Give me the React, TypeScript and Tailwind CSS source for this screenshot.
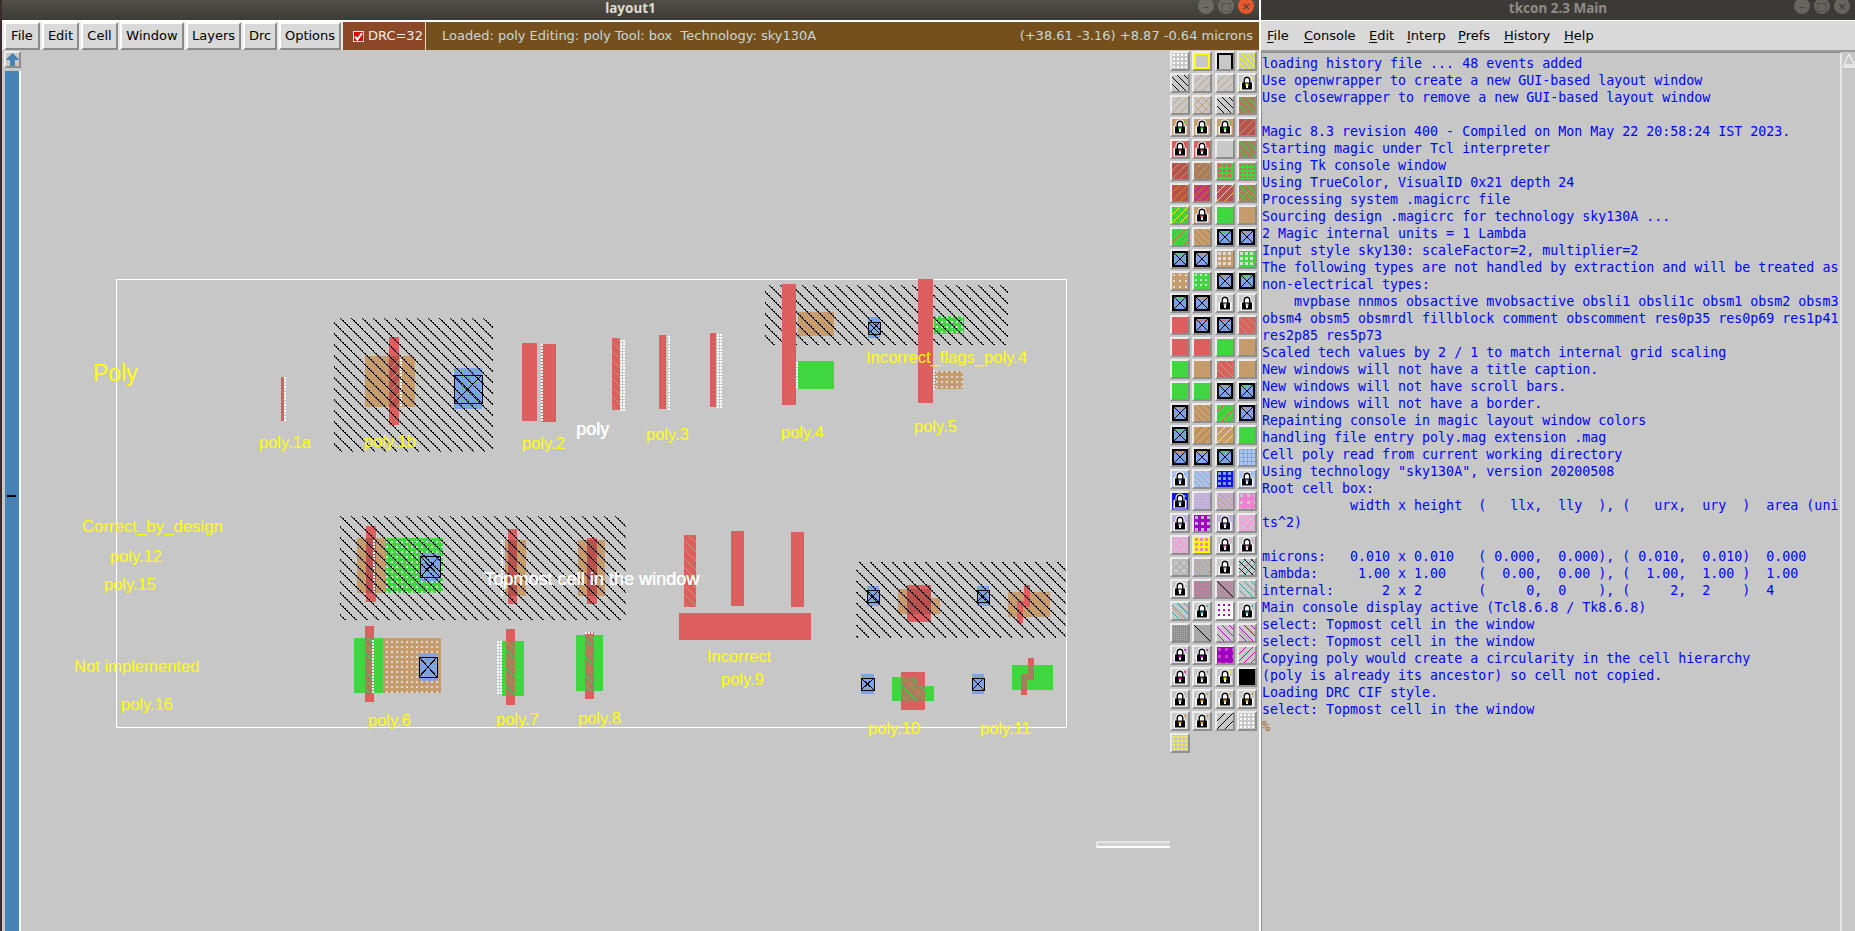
const RED = "#dc5e5e";
const TAN = "#c69c6d";
const GREEN = "#3fd63f";
const BROWN = "#a67e5c";
const DARKRED = "#b8524f";
const BLUE = "#7ca3ea";

const MENU = [
  { name: "File", w: "w-[36px]" },
  { name: "Edit", w: "w-[37px]" },
  { name: "Cell", w: "w-[37px]" },
  { name: "Window", w: "w-[64px]" },
  { name: "Layers", w: "w-[55px]" },
  { name: "Drc", w: "w-[34px]" },
  { name: "Options", w: "w-[62px]" },
];
const TKMENU = [
  { name: "File", w: "w-[37px]" },
  { name: "Console", w: "w-[65px]" },
  { name: "Edit", w: "w-[38px]" },
  { name: "Interp", w: "w-[51px]" },
  { name: "Prefs", w: "w-[46px]" },
  { name: "History", w: "w-[60px]" },
  { name: "Help", w: "w-[40px]" },
];

const LOG = [
  "loading history file ... 48 events added",
  "Use openwrapper to create a new GUI-based layout window",
  "Use closewrapper to remove a new GUI-based layout window",
  " ",
  "Magic 8.3 revision 400 - Compiled on Mon May 22 20:58:24 IST 2023.",
  "Starting magic under Tcl interpreter",
  "Using Tk console window",
  "Using TrueColor, VisualID 0x21 depth 24",
  "Processing system .magicrc file",
  "Sourcing design .magicrc for technology sky130A ...",
  "2 Magic internal units = 1 Lambda",
  "Input style sky130: scaleFactor=2, multiplier=2",
  "The following types are not handled by extraction and will be treated as",
  "non-electrical types:",
  "    mvpbase nnmos obsactive mvobsactive obsli1 obsli1c obsm1 obsm2 obsm3",
  "obsm4 obsm5 obsmrdl fillblock comment obscomment res0p35 res0p69 res1p41",
  "res2p85 res5p73",
  "Scaled tech values by 2 / 1 to match internal grid scaling",
  "New windows will not have a title caption.",
  "New windows will not have scroll bars.",
  "New windows will not have a border.",
  "Repainting console in magic layout window colors",
  "handling file entry poly.mag extension .mag",
  "Cell poly read from current working directory",
  'Using technology "sky130A", version 20200508',
  "Root cell box:",
  "           width x height  (   llx,  lly  ), (   urx,  ury  )  area (uni",
  "ts^2)",
  " ",
  "microns:   0.010 x 0.010   ( 0.000,  0.000), ( 0.010,  0.010)  0.000",
  "lambda:     1.00 x 1.00    (  0.00,  0.00 ), (  1.00,  1.00 )  1.00",
  "internal:      2 x 2       (     0,  0    ), (     2,  2    )  4",
  "Main console display active (Tcl8.6.8 / Tk8.6.8)",
  "select: Topmost cell in the window",
  "select: Topmost cell in the window",
  "Copying poly would create a circularity in the cell hierarchy",
  "(poly is already its ancestor) so cell not copied.",
  "Loading DRC CIF style.",
  "select: Topmost cell in the window",
];

// label: text, left x, baseline y, font size
const LABELS: [string, number, number, number, string?][] = [
  ["Poly", 93, 382, 23],
  ["poly.1a", 259, 448, 16.5],
  ["poly.1b", 364, 447, 16.5],
  ["poly.2", 522, 449, 16.5],
  ["poly", 576, 435, 18, "#ffffff"],
  ["poly.3", 646, 440, 16.5],
  ["poly.4", 781, 438, 16.5],
  ["poly.5", 914, 432, 16.5],
  ["Incorrect_flags_poly.4", 866, 364, 16.6],
  ["Correct_by_design", 82, 533, 16.8],
  ["poly.12", 110, 562, 16.5],
  ["poly.15", 104, 590, 16.5],
  ["Not implemented", 74, 673, 16.6],
  ["poly.16", 121, 710, 16.5],
  ["poly.6", 368, 726, 16.5],
  ["poly.7", 496, 725, 16.5],
  ["poly.8", 578, 724, 16.5],
  ["Topmost cell in the window", 484, 585, 18.1, "#ffffff"],
  ["Incorrect", 707, 662, 16.5],
  ["poly.9", 721, 685, 16.5],
  ["poly.10", 868, 734, 16.5],
  ["poly.11", 980, 734, 16.5],
];

type Line = [string, "/" | "\\", number?];
type TileSpec = {
  b?: string;
  l?: Line[];
  d?: [string, number, number];
  x?: string;
  k?: string;
  o?: string;
  r?: string;
};

const GRAY = "#c8c8c8";
const lock = (k: string, b = GRAY): TileSpec => ({ b, k });
const con = (x: string): TileSpec => ({ b: BLUE, x });
const hatch = (b: string, c: string, dir: "/" | "\\" = "/", n = 8): TileSpec => ({ b, l: [[c, dir, n]] });
const dots = (b: string, c: string, s = 2, n = 4): TileSpec => ({ b, d: [c, s, n] });
const solid = (b: string): TileSpec => ({ b });
const ring = (r: string, b = GRAY): TileSpec => ({ b, r });

const TILES: TileSpec[] = [
  dots(GRAY, "#ffffff"), { b: GRAY, o: "#ffff00" }, { b: GRAY, o: "#000000" }, hatch(GRAY, "#ffff00", "\\", 6),
  hatch(GRAY, "#000000", "\\", 7), hatch(GRAY, TAN), hatch(GRAY, TAN), lock("#ffff00"),
  hatch(GRAY, TAN), { b: GRAY, l: [[TAN, "/", 8], [TAN, "\\", 8]] }, hatch(GRAY, "#000000", "\\", 7), hatch(BROWN, GREEN, "\\"),
  lock(GREEN, TAN), lock(GREEN, TAN), lock(GREEN, TAN), hatch(DARKRED, TAN),
  lock(DARKRED, RED), lock(DARKRED, RED), solid(GRAY), { b: BROWN, l: [[GREEN, "\\", 8], [RED, "/", 8]] },
  hatch(DARKRED, TAN), hatch(BROWN, TAN), dots(GREEN, RED, 3, 5), dots(GREEN, RED, 2, 4),
  hatch(DARKRED, "#e08a1e"), hatch(DARKRED, "#d000a0"), hatch(DARKRED, "#ffff00"), { b: BROWN, l: [[GREEN, "\\", 8], ["#e08a1e", "/", 8]] },
  { b: GREEN, l: [["#ffff00", "/", 8], [RED, "\\", 8]] }, lock(RED, TAN), solid(GREEN), solid(TAN),
  hatch(GREEN, RED, "/", 7), hatch(TAN, BROWN, "\\", 7), con(GREEN), con(TAN),
  con(GREEN), con(TAN), dots(TAN, "#dcdcdc", 3, 5), dots(GREEN, "#dcdcdc", 3, 5),
  dots(TAN, "#dcdcdc", 2, 6), dots(GREEN, "#dcdcdc", 2, 5), con(TAN), con(GREEN),
  con(GREEN), con(TAN), lock("#cccccc"), lock("#cccccc"),
  solid(RED), con(RED), con(RED), hatch(RED, TAN, "\\"),
  solid(RED), solid(RED), solid(GREEN), solid(TAN),
  solid(GREEN), solid(TAN), hatch(RED, TAN, "\\"), solid(TAN),
  solid(GREEN), solid(GREEN), con(TAN), con(GREEN),
  con(TAN), hatch(TAN, BROWN, "\\", 7), hatch(GREEN, RED, "/", 7), con(TAN),
  con(GREEN), hatch(TAN, "#a87a18"), hatch(TAN, "#ffff00"), solid(GREEN),
  con("#e08a1e"), con("#e8c020"), con(GREEN), dots(BLUE, "#b0c8f0", 3, 4),
  lock(BLUE, "#a9c2f0"), hatch("#a9c2f0", TAN, "\\", 6), dots("#1010f0", BLUE, 3, 5), lock(BLUE, "#a9c2f0"),
  lock(BLUE, "#1010f0"), dots("#c0b0d8", "#d4c8e4", 1, 3), hatch("#c0b0d8", TAN, "\\", 6), dots("#f080d0", "#c8c8c8", 3, 7),
  lock("#c0a8e0", "#c0b0d8"), dots("#a000c0", "#c0b0d8", 3, 6), lock("#c0a8e0", "#c0b0d8"), ring("#f4a0dc"),
  ring("#f4a0dc"), dots("#ffff00", "#f080d0", 3, 5), lock("#f080d0"), lock("#f080d0"),
  ring("#b4b4b4"), hatch("#b4b4b4", TAN, "\\", 6), lock("#c0c0c0"), { b: GRAY, l: [["#28a8a8", "/", 7], ["#000000", "\\", 7]] },
  lock("#ffffff"), dots("#c080a0", "#909090", 2, 4), hatch("#b090a0", "#000000", "\\", 16), hatch(GRAY, "#28a8a8", "\\", 7),
  { b: GRAY, l: [["#28a8a8", "\\", 7], [TAN, "\\", 11]] }, lock("#28a8a8"), dots("#ffffff", "#b000c0", 2, 5), lock("#28a8a8"),
  dots("#a0a0a0", "#787878", 1, 2), hatch("#a8a8a8", "#000000", "\\", 16), hatch(GRAY, "#b000c0", "\\", 7), { b: GRAY, l: [["#b000c0", "\\", 7], [TAN, "\\", 11]] },
  lock("#b000c0"), lock("#b000c0"), dots("#a000c0", "#d040d0", 3, 7), hatch(GRAY, "#d000a0", "/", 7),
  lock("#d000a0"), lock("#888888"), lock("#ffff00"), solid("#000000"),
  lock("#b0b0b0"), lock("#c89018"), lock("#c89018"), lock("#c89018"),
  lock("#c89018"), lock("#c89018"), hatch(GRAY, "#000000", "/", 8), dots(GRAY, "#ffffff", 2, 4),
  dots(GRAY, "#ffff00", 2, 4),
];

function Tile({ t }: { t: TileSpec }) {
  const parts: React.ReactNode[] = [];
  (t.l || []).forEach(([c, dir, n = 8], a) => {
    for (let i = -16; i < 32; i += n) {
      const d = dir === "/" ? `M${i} 16L${i + 16} 0` : `M${i} 0L${i + 16} 16`;
      parts.push(<path key={`l${a}${i}`} d={d} stroke={c} strokeWidth="1" fill="none" />);
    }
  });
  if (t.d) {
    const [c, s, n] = t.d;
    for (let y = 1; y < 16; y += n) {
      for (let x = 1; x < 16; x += n) {
        parts.push(<rect key={`d${x}-${y}`} x={x} y={y} width={s} height={s} fill={c} />);
      }
    }
  }
  return (
    <div className="w-5 h-5 border-2 border-t-[#ececec] border-l-[#ececec] border-r-[#8e8e8e] border-b-[#8e8e8e] bg-[#c8c8c8]">
      <svg width="16" height="16" viewBox="0 0 16 16" shapeRendering="crispEdges" className="block">
        <rect width="16" height="16" fill={t.b} />
        {parts}
        {t.r && (
          <g shapeRendering="auto" fill="none" stroke={t.r} strokeWidth="2">
            <circle cx="4" cy="4" r="3.2" />
            <circle cx="12" cy="4" r="3.2" />
            <circle cx="4" cy="12" r="3.2" />
            <circle cx="12" cy="12" r="3.2" />
          </g>
        )}
        {t.o === "#ffff00" && <rect x="1" y="1" width="14" height="14" fill="none" stroke={t.o} strokeWidth="1.5" />}
        {t.o === "#000000" && <path d="M1 16V1H15V16" fill="none" stroke={t.o} strokeWidth="1.5" />}
        {t.x && (
          <>
            <path d="M0 3.5H16M0 8.5H16M0 12.5H16" stroke={t.x} strokeWidth="1" strokeDasharray="3 2" />
            <rect x="1" y="1" width="14" height="14" fill="none" stroke="#000" strokeWidth="2" />
            <path d="M1 1L15 15M15 1L1 15" stroke="#000" strokeWidth="1" />
          </>
        )}
        {t.k && (
          <g shapeRendering="auto">
            <circle cx="13" cy="3" r="1" fill={t.k} />
            <circle cx="2" cy="14" r="1" fill={t.k} />
            <path d="M8 0.5C5 0.5 3.5 2.5 3.5 5V7H1.5V15.5H14.5V7H12.5V5C12.5 2.5 11 0.5 8 0.5Z" fill="#fff" />
            <path d="M5.2 8V5.2C5.2 3.4 6.2 2.2 8 2.2S10.8 3.4 10.8 5.2V8" fill="none" stroke="#000" strokeWidth="1.4" />
            <rect x="3" y="7.5" width="10" height="7" fill="#000" />
            <rect x="7" y="9" width="2" height="4" fill="#fff" />
            <rect x="6.5" y="8.5" width="3" height="2" fill={t.k} />
          </g>
        )}
      </svg>
    </div>
  );
}

function Box({ x, y, w, h, c }: { x: number; y: number; w: number; h: number; c: string }) {
  return <rect x={x} y={y} width={w} height={h} fill={c} />;
}

// vertical white dotted edge the DRC checker paints
function Dots({ x, y, h, cols = 1 }: { x: number; y: number; h: number; cols?: number }) {
  const out: React.ReactNode[] = [];
  for (let c = 0; c < cols; c++) {
    for (let i = 0; i < h; i += 3) {
      out.push(<rect key={`${c}-${i}`} x={x + c * 3} y={y + i} width={2} height={2} fill="#fff" />);
    }
  }
  return <>{out}</>;
}

function Contact({ x, y, w, h, by, bh, c = GREEN }: { x: number; y: number; w: number; h: number; by: number; bh: number; c?: string }) {
  const rows: number[] = [];
  for (let r = y + 2; r < y + h; r += 6) rows.push(r);
  return (
    <g>
      <rect x={x} y={y} width={w} height={h} fill={BLUE} />
      {rows.map((r) => (
        <path key={r} d={`M${x} ${r}H${x + w}`} stroke={c} strokeWidth="1" strokeDasharray="2 5" />
      ))}
      <rect x={x} y={by} width={w} height={bh} fill="none" stroke="#000" strokeWidth="1" />
      <path d={`M${x} ${by}L${x + w} ${by + bh}M${x + w} ${by}L${x} ${by + bh}`} stroke="#000" strokeWidth="1" />
    </g>
  );
}

function Layout() {
  return (
    <svg viewBox="21 50 1149 881" width="1149" height="881" shapeRendering="crispEdges" className="absolute inset-0">
      <defs>
        <pattern id="ndiff" width="11" height="11" patternUnits="userSpaceOnUse">
          {Array.from({ length: 11 }).map((_, i) => (
            <rect key={i} x={i} y={i} width={i % 2 ? 2 : 1} height="1" fill="#000" />
          ))}
        </pattern>
        <pattern id="tanHatch" width="11" height="11" patternUnits="userSpaceOnUse">
          <path d="M0 11L11 0" stroke={TAN} strokeWidth="1" />
        </pattern>
        <pattern id="greenHatch" width="9" height="9" patternUnits="userSpaceOnUse">
          <path d="M0 0L9 9" stroke={GREEN} strokeWidth="1" />
        </pattern>
        <pattern id="tanBack" width="9" height="9" patternUnits="userSpaceOnUse">
          <path d="M0 0L9 9" stroke={TAN} strokeWidth="1" />
        </pattern>
        <pattern id="greenDots" width="5" height="5" patternUnits="userSpaceOnUse">
          <rect width="5" height="5" fill={GREEN} />
          <rect x="1" y="1" width="2" height="2" fill="#d8d8d8" />
        </pattern>
        <pattern id="tanDots" width="5" height="5" patternUnits="userSpaceOnUse">
          <rect width="5" height="5" fill={TAN} />
          <rect x="1" y="1" width="2" height="2" fill="#d8d8d8" />
        </pattern>
      </defs>

      <rect x="116.5" y="279" width="950" height="448" fill="none" stroke="#fff" strokeWidth="1" />

      {/* poly.1a */}
      <Box x={281} y={377} w={3} h={44} c={RED} />
      <Dots x={284} y={377} h={44} />

      {/* poly.1b */}
      <Box x={365} y={356} w={50} h={51} c={TAN} />
      <Box x={389} y={337} w={10} h={88} c={RED} />
      <Box x={389} y={356} w={10} h={51} c={DARKRED} />
      <Box x={389} y={356} w={10} h={51} c="url(#tanHatch)" />
      <Dots x={400} y={356} h={51} />
      <Contact x={454} y={368} w={28} h={41} by={375} bh={28} />
      <Box x={334} y={318} w={159} h={134} c="url(#ndiff)" />

      {/* poly.2 */}
      <Box x={522} y={343} w={15} h={78} c={RED} />
      <Box x={541} y={344} w={15} h={78} c={RED} />
      <Dots x={541} y={344} h={78} />

      {/* poly.3 */}
      <Box x={612} y={338} w={8} h={72} c={RED} />
      <Box x={612} y={338} w={8} h={72} c="url(#tanBack)" />
      <Dots x={620} y={340} h={70} cols={2} />
      <Box x={659} y={335} w={7} h={74} c={RED} />
      <Dots x={668} y={336} h={73} />
      <Box x={710} y={333} w={6} h={74} c={RED} />
      <Dots x={717} y={334} h={73} cols={2} />

      {/* poly.4 */}
      <Box x={798} y={312} w={36} h={24} c={TAN} />
      <Contact x={868} y={317} w={12} h={21} by={322} bh={12} />
      <Box x={934} y={316} w={30} h={18} c="url(#greenDots)" />
      <Box x={765} y={285} w={243} h={60} c="url(#ndiff)" />
      <Box x={782} y={284} w={14} h={121} c={RED} />
      <Box x={918} y={279} w={15} h={124} c={RED} />
      <Box x={798} y={361} w={36} h={28} c={GREEN} />
      <Dots x={796} y={362} h={27} />
      <Box x={934} y={371} w={29} h={18} c="url(#tanDots)" />
      <Dots x={933} y={370} h={19} />

      {/* poly.12 / poly.15 */}
      <Box x={357} y={538} w={28} h={55} c={TAN} />
      <Box x={385} y={538} w={58} h={55} c="url(#greenDots)" />
      <Box x={366} y={526} w={10} h={76} c={RED} />
      <Box x={366} y={538} w={10} h={55} c={DARKRED} />
      <Dots x={373} y={540} h={53} />
      <Contact x={420} y={553} w={20} h={28} by={556} bh={21} />
      <Box x={505} y={540} w={21} h={56} c={TAN} />
      <Box x={508} y={529} w={9} h={75} c={RED} />
      <Box x={508} y={540} w={9} h={56} c={DARKRED} />
      <Dots x={501} y={540} h={55} />
      <Box x={578} y={540} w={27} h={56} c={TAN} />
      <Box x={587} y={538} w={10} h={66} c={RED} />
      <Box x={587} y={540} w={10} h={56} c={DARKRED} />
      <Box x={340} y={516} w={286} h={104} c="url(#ndiff)" />

      {/* poly.6 */}
      <Box x={354} y={638} w={29} h={55} c={GREEN} />
      <Box x={365} y={626} w={9} h={76} c={RED} />
      <Box x={365} y={638} w={9} h={55} c={BROWN} />
      <Box x={365} y={638} w={9} h={55} c="url(#greenHatch)" />
      <Dots x={372} y={640} h={53} />
      <Box x={383} y={638} w={58} h={55} c="url(#tanDots)" />
      <Contact x={419} y={654} w={18} h={27} by={657} bh={20} c={TAN} />

      {/* poly.7 */}
      <Box x={506} y={629} w={9} h={76} c={RED} />
      <Box x={502} y={641} w={22} h={55} c={GREEN} />
      <Box x={506} y={641} w={9} h={55} c={BROWN} />
      <Box x={506} y={641} w={9} h={55} c="url(#greenHatch)" />
      <Dots x={497} y={641} h={53} cols={2} />

      {/* poly.8 */}
      <Box x={585} y={632} w={9} h={67} c={RED} />
      <Box x={576} y={635} w={27} h={56} c={GREEN} />
      <Box x={585} y={635} w={9} h={56} c={BROWN} />
      <Box x={585} y={635} w={9} h={56} c="url(#greenHatch)" />
      <Dots x={585} y={632} h={2} cols={3} />

      {/* poly.9 */}
      <Box x={684} y={535} w={12} h={72} c={RED} />
      <Box x={684} y={535} w={12} h={72} c="url(#tanBack)" />
      <Box x={731} y={531} w={13} h={75} c={RED} />
      <Box x={791} y={532} w={13} h={75} c={RED} />
      <Box x={679} y={613} w={132} h={27} c={RED} />

      {/* poly.10 top */}
      <Contact x={867} y={586} w={12} h={20} by={590} bh={12} />
      <Box x={898} y={589} w={42} h={25} c={TAN} />
      <Box x={931} y={589} w={9} h={9} c={GRAY} />
      <Box x={907} y={585} w={24} h={37} c={RED} />
      <Box x={907} y={589} w={24} h={25} c={DARKRED} />
      <Contact x={977} y={586} w={12} h={20} by={590} bh={12} />
      {/* poly.11 top */}
      <Box x={1008} y={592} w={42} h={25} c={TAN} />
      <Box x={1024} y={585} w={6} h={22} c={RED} />
      <Box x={1017} y={601} w={6} h={22} c={RED} />
      <Box x={1023} y={601} w={7} h={6} c={RED} />
      <Box x={856} y={562} w={210} h={76} c="url(#ndiff)" />

      {/* poly.10 bottom */}
      <Contact x={861} y={674} w={13} h={20} by={678} bh={12} c={TAN} />
      <Box x={892} y={677} w={9} h={24} c={GREEN} />
      <Box x={925} y={686} w={9} h={15} c={GREEN} />
      <Box x={901} y={672} w={24} h={38} c={RED} />
      <Box x={901} y={677} w={16} h={9} c={BROWN} />
      <Box x={901} y={686} w={24} h={15} c={BROWN} />
      <Box x={901} y={677} w={24} h={24} c="url(#greenHatch)" />
      <Box x={917} y={672} w={8} h={14} c={RED} />
      <Contact x={972} y={674} w={12} h={20} by={678} bh={12} c={TAN} />

      {/* poly.11 bottom */}
      <Box x={1012} y={665} w={41} h={25} c={GREEN} />
      <Box x={1028} y={658} w={6} h={7} c={RED} />
      <Box x={1028} y={665} w={6} h={15} c={BROWN} />
      <Box x={1021} y={674} w={7} h={6} c={BROWN} />
      <Box x={1021} y={674} w={6} h={16} c={BROWN} />
      <Box x={1021} y={690} w={6} h={5} c={RED} />
    </svg>
  );
}

function WinButton({ c, glyph }: { c: string; glyph: string }) {
  return (
    <div className={`w-4 h-4 rounded-full flex items-center justify-center text-[11px] leading-none ${c}`}>{glyph}</div>
  );
}

export default function App() {
  return (
    <div className="w-[1855px] h-[931px] flex overflow-hidden bg-[#c7c7c7] font-['DejaVu_Sans',sans-serif] text-[13px]">
      {/* layout window */}
      <div className="w-[1259px] h-full flex flex-col shrink-0 border-l-2 border-l-[#3a2b2e]">
        <div className="h-5 shrink-0 relative flex justify-center bg-gradient-to-b from-[#524f48] to-[#3c3b37]">
          <span className="font-['Noto_Sans',sans-serif] font-bold text-[13.5px] leading-[16px] text-[#dfdbd2]">layout1</span>
          <div className="absolute right-[5px] -top-[2px] flex gap-1 text-[#3c3b37]">
            <WinButton c="bg-[#6d6b65]" glyph="–" />
            <WinButton c="bg-[#6d6b65]" glyph="□" />
            <WinButton c="bg-[#e9582c]" glyph="×" />
          </div>
        </div>
        <div className="h-[30px] shrink-0 flex items-stretch border-t-2 border-t-white bg-[#e8e8e8] pl-[2px]">
          <div className="flex gap-[2px]">
            {MENU.map((m) => (
              <div
                key={m.name}
                className={`${m.w} flex items-center justify-center bg-[#d9d9d9] text-black border-2 border-t-white border-l-white border-r-[#8a8a8a] border-b-[#8a8a8a]`}
              >
                {m.name}
              </div>
            ))}
          </div>
          <div className="ml-[2px] w-[83px] flex items-center gap-[4px] pl-[10px] bg-[#8b4726] text-[#f0f0f0] border-r border-r-[#ddd] whitespace-pre">
            <span className="w-[11px] h-[11px] shrink-0 bg-[#e00000] border border-[#f0f0f0] flex items-center justify-center">
              <svg width="9" height="9" viewBox="0 0 9 9">
                <path d="M1 4.5L3.5 7.5L8 1" fill="none" stroke="#fff" strokeWidth="2" />
              </svg>
            </span>
            DRC=32
          </div>
          <div className="flex-1 flex items-center justify-between pl-[16px] pr-[6px] bg-[#75501d] text-[#c4d8dc] whitespace-pre">
            <span>Loaded: poly Editing: poly Tool: box  Technology: sky130A</span>
            <span>(+38.61 -3.16) +8.87 -0.64 microns</span>
          </div>
        </div>
        <div className="flex-1 flex min-h-0">
          <div className="w-[19px] shrink-0 flex flex-col pl-[2px] pt-[1px] gap-[3px]">
            <div className="w-[17px] h-[17px] flex items-center justify-center border-2 border-t-[#ececec] border-l-[#ececec] border-r-[#8e8e8e] border-b-[#8e8e8e]">
              <svg width="13" height="13" viewBox="0 0 13 13" shapeRendering="crispEdges">
                <path d="M6.5 0L13 7H9V13H4V7H0Z" fill="#4682b4" />
              </svg>
            </div>
            <div className="relative flex-1 ml-[1px] w-[16px] bg-[#4682b4] border-r-2 border-r-white">
              <div className="absolute left-[2px] top-[424px] w-[9px] h-[2px] bg-black" />
            </div>
          </div>
          <div className="relative flex-1 bg-[#c7c7c7] min-w-0">
            <Layout />
            {LABELS.map(([text, x, y, size, color]) => (
              <span
                key={text + x}
                className={`absolute whitespace-pre font-['Liberation_Sans',sans-serif] leading-none ${color ? "[text-shadow:0.4px_0_0_#fff]" : ""}`}
                style={{ left: x - 21, top: y - 50 - size * 0.85, fontSize: size, color: color ?? "#ffff00" }}
              >
                {text}
              </span>
            ))}
            <div className="absolute left-[1075px] top-[791px] w-[74px] h-[7px] border-2 border-r-0 border-t-[#e4e4e4] border-l-[#e4e4e4] border-b-white bg-[#d0d0d0]" />
          </div>
          <div className="w-[89px] shrink-0 pt-[1px] grid grid-cols-[repeat(4,20px)] auto-rows-[20px] gap-x-[2.33px] gap-y-[2px] content-start">
            {TILES.map((t, i) => (
              <Tile key={i} t={t} />
            ))}
          </div>
        </div>
      </div>

      {/* tkcon window */}
      <div className="flex-1 h-full flex flex-col border-l-2 border-l-white min-w-0">
        <div className="h-5 shrink-0 relative flex justify-center bg-[#3b3a36]">
          <span className="font-['Noto_Sans',sans-serif] font-bold text-[13.5px] leading-[16px] text-[#8f8c86]">tkcon 2.3 Main</span>
          <div className="absolute right-[5px] -top-[2px] flex gap-1 text-[#3b3a36]">
            <WinButton c="bg-[#66645f]" glyph="–" />
            <WinButton c="bg-[#66645f]" glyph="□" />
            <WinButton c="bg-[#66645f]" glyph="×" />
          </div>
        </div>
        <div className="h-[32px] shrink-0 flex items-center pl-[6px] bg-[#d9d9d9] border-t border-t-white border-b-2 border-b-[#999] text-black">
          {TKMENU.map((m) => (
            <span key={m.name} className={m.w}>
              <span className="underline underline-offset-2">{m.name[0]}</span>
              {m.name.slice(1)}
            </span>
          ))}
        </div>
        <div className="flex-1 flex min-h-0">
          <div className="flex-1 min-w-0 border-l border-l-[#8e8e8e] border-t border-t-[#8e8e8e] border-r-2 border-r-[#e8e8e8] pt-[2px] bg-[#c7c7c7] font-['DejaVu_Sans_Mono',monospace] text-[13.3px] leading-[17px] text-[#0000ff] whitespace-pre overflow-hidden">
            {LOG.map((l, i) => (
              <div key={i} className="h-[17px]">{l}</div>
            ))}
            <div className="h-[17px] text-[#a5692a]">%</div>
          </div>
          <div className="w-[13px] shrink-0 bg-[#c7c7c7] pl-[1px]">
            <svg width="12" height="13" viewBox="0 0 12 13" className="block mt-[1px]">
              <path d="M6 1L11 12H1Z" fill="#c7c7c7" stroke="#fff" strokeWidth="1" />
            </svg>
            <div className="h-[2px] bg-[#e8e8e8]" />
          </div>
        </div>
      </div>
    </div>
  );
}
